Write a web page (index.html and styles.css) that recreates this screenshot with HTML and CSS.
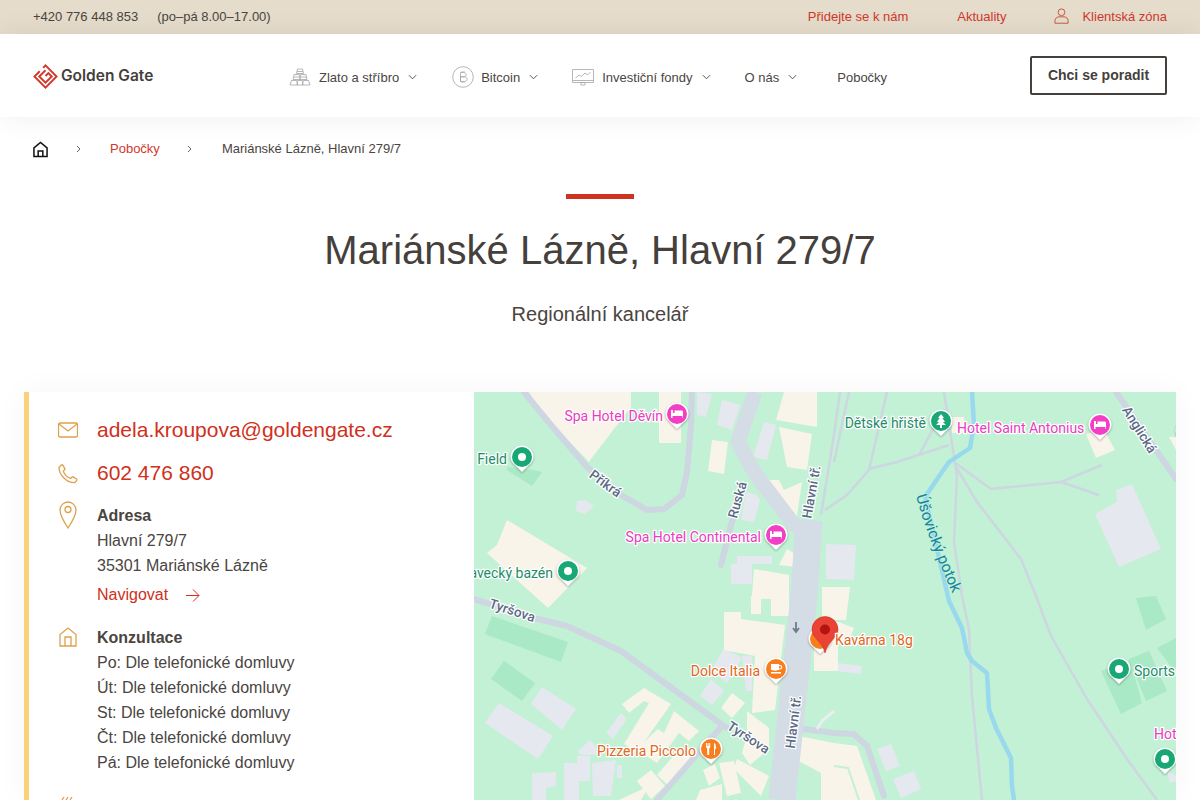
FILE: index.html
```html
<!DOCTYPE html>
<html lang="cs">
<head>
<meta charset="utf-8">
<title>Mariánské Lázně, Hlavní 279/7 | Golden Gate</title>
<link rel="stylesheet" href="styles.css">
</head>
<body>
<div class="topbar">
  <div class="topbar-left"><span>+420 776 448 853</span><span>(po–pá 8.00–17.00)</span></div>
  <div class="topbar-right">
    <a>Přidejte se k nám</a>
    <a>Aktuality</a>
    <a class="client"><svg class="user-icon" viewBox="0 0 16 17"><circle cx="8" cy="4.5" r="3.6"/><path d="M1 16.2v-2.6c0-2.4 1.9-4.2 4.2-4.2h5.600c2.300 0 4.200 1.800 4.200 4.200v2.600z"/></svg>Klientská zóna</a>
  </div>
</div>
<header class="header">
  <div class="logo">
    <svg class="logo-mark" viewBox="0 0 26 26"><path d="M10.500 4 13 1.500 24.500 13 13 24.500 1.500 13l5.500-5.500"/><path d="M13 6.500 6.500 13l6.500 6.500 6.500-6.500-3.500-3.500-3 3"/></svg>
    <span>Golden Gate</span>
  </div>
  <nav class="nav">
    <a class="nav-gold"><svg class="nav-icon bars" viewBox="0 0 22 18"><path d="M8.500 1h5l1 4.500h-7zM5 6.500h5.300l.7 5H4zM11.700 6.500H17l1 5h-7zM2.500 12.500h5.300l.7 4.500H1zM8.700 12.500h4.600l.7 4.500H8zM14.200 12.500h5.300l1.500 4.500h-7.500zM8 3.500h6M5 9h5.500M12 9h5.500"/></svg>Zlato a stříbro<svg class="chev" viewBox="0 0 10 6"><path d="m1 1 4 4 4-4"/></svg></a>
    <a class="nav-btc"><svg class="nav-icon btc" viewBox="0 0 22 22"><circle cx="11" cy="11" r="10.300"/><path d="M8.500 6.500h3.300c3.200 0 3.200 4.300 0 4.300H8.500m0 0h4c3.500 0 3.500 4.700 0 4.700h-4zM8.500 6.500v9M10 5v1.500M12 5v1.500M10 15.500V17M12 15.500V17"/></svg>Bitcoin<svg class="chev" viewBox="0 0 10 6"><path d="m1 1 4 4 4-4"/></svg></a>
    <a class="nav-fund"><svg class="nav-icon chart" viewBox="0 0 22 17"><path d="M.5.500h21v13H.5zM.5 11.500h21M9 13.500h4v2.500H9zM3.500 9l3.500-3 2.500 1.500L13 4l2.500 2 3-3"/></svg>Investiční fondy<svg class="chev" viewBox="0 0 10 6"><path d="m1 1 4 4 4-4"/></svg></a>
    <a class="nav-about">O nás<svg class="chev" viewBox="0 0 10 6"><path d="m1 1 4 4 4-4"/></svg></a>
    <a class="nav-branch">Pobočky</a>
  </nav>
  <a class="cta">Chci se poradit</a>
</header>
<div class="crumbs">
  <svg class="home" viewBox="0 0 16 17"><path d="M1 16V6.800L8 1l7 5.800V16zM5.500 16v-6h5v6"/></svg>
  <svg class="crumb-sep" viewBox="0 0 5 8"><path d="m1 1 3 3-3 3"/></svg>
  <a>Pobočky</a>
  <svg class="crumb-sep" viewBox="0 0 5 8"><path d="m1 1 3 3-3 3"/></svg>
  <span>Mariánské Lázně, Hlavní 279/7</span>
</div>
<section class="hero">
  <div class="hero-bar"></div>
  <h1>Mariánské Lázně, Hlavní 279/7</h1>
  <p>Regionální kancelář</p>
</section>
<main class="card">
  <div class="info">
    <div class="row row-mail">
      <svg class="ico" viewBox="0 0 20 16"><rect x=".5" y="1" width="19" height="14" rx="1.500"/><path d="m1 2 9 7 9-7"/></svg>
      <a class="big">adela.kroupova@goldengate.cz</a>
    </div>
    <div class="row row-phone">
      <svg class="ico" viewBox="0 0 20 20"><path d="M1 3.500 3.500 1c.5-.4 1-.4 1.300.1l2 3.500c.2.400.2.800-.1 1.100L5.300 7.100c1 3.200 3.800 6 7.300 7.400l1.400-1.500c.3-.3.700-.3 1.100-.1l3.500 2.100c.4.300.5.800.1 1.300L16.800 18.700C9 19 1 11 1 3.500z"/></svg>
      <a class="big">602 476 860</a>
    </div>
    <div class="row row-addr">
      <svg class="ico" viewBox="0 0 18 28"><path d="M9 27C5 21 1 15 1 9a8 8 0 0 1 16 0c0 6-4 12-8 18z"/><circle cx="9" cy="8.500" r="3"/></svg>
      <div class="txt">
        <strong>Adresa</strong>
        <div>Hlavní 279/7</div>
        <div>35301 Mariánské Lázně</div>
        <a class="navigate">Navigovat<svg class="arrow" viewBox="0 0 14 13"><path d="M0 6.500h13M7 .5l6 6-6 6"/></svg></a>
      </div>
    </div>
    <div class="row row-hours">
      <svg class="ico" viewBox="0 0 18 20"><path d="M1 19V7.500L9 1l8 6.500V19zM6 19v-9h6v9"/></svg>
      <div class="txt">
        <strong>Konzultace</strong>
        <div>Po: Dle telefonické domluvy</div>
        <div>Út: Dle telefonické domluvy</div>
        <div>St: Dle telefonické domluvy</div>
        <div>Čt: Dle telefonické domluvy</div>
        <div>Pá: Dle telefonické domluvy</div>
      </div>
    </div>
    <div class="row row-next">
      <svg class="ico ico-next" viewBox="0 0 20 20"><path d="M4 4 6 1M8 4l2-3M12 4l2-3"/></svg>
    </div>
  </div>
  <div class="map">
    <svg class="map-svg" viewBox="474 392 702 408">
      <defs>
        <path id="pinshape" d="M-11.500 0a11.500 11.500 0 1 1 23 0c0 3.800-2 6.300-5 8.500L0 15l-6.500-6.500c-3-2.200-5-4.700-5-8.500z"/>
        <path id="potok" d="M916 496 Q928 540 958 606"/>
      </defs>
      <g class="m-field">
        <path d="M507 467l26 3 9 2-10 14-25-16z"/>
        <path d="M492 616l76 26-7 20-76-28z"/>
        <path d="M504 661l31 22-13 18-31-22z"/>
        <path d="M1136 598l20-2 10 23-20 11z"/>
        <path d="M1157 648l19-10v35z"/>
        <path d="M1101 671l29-11 12 43-21 11z"/>
        <path d="M1129 659l20-8 18 40-21 10z"/>
      </g>
      <g class="m-gray">
        <path d="M697 392l15 2-6 23-9-2z"/>
        <path d="M722 400l18 5-8 25-15-5z"/>
        <path d="M764 422l12 3-9 35-14-3z"/>
        <path d="M746 492l11 3 3 5-6 22-13-2z"/>
        <path d="M577 501l8-1 9 6-9 8-9-3z"/>
        <path d="M737 556h35v8h-35zM731 564h21v20h-21z"/>
        <path d="M826 544l30 1-2 35-28-1z"/>
        <path d="M542 687l34 22-14 21-31-26z"/>
        <path d="M499 703l54 33-15 23-53-36z"/>
        <path d="M621 713l6 6-14 20-7-6z"/>
        <path d="M577 756h13v25h-13z"/>
        <path d="M564 763h15v37h-15z"/>
        <path d="M592 763l24-3-5 36h-18z"/>
        <path d="M617 765h5v13h-5z"/>
        <path d="M532 773l24-1v14l-10 2v12h-14z"/>
        <path d="M577 752l13-12 7 8v7h-15z"/>
        <path d="M724 648l18 10-15 25-16-12z"/>
        <path d="M711 679l13 12-12 14-12-9z"/>
        <path d="M742 656h10v35h-6z"/>
        <path d="M838 663l24 3-1 8-24-3z"/>
        <path d="M877 749l14-5 9 22-14 5z"/>
        <path d="M893 779l21-8 7 18-20 9z"/>
        <path d="M1116 490l16-6 29 65-42 18-24-53 22-12z"/>
        <path d="M1167 771l9 5v5l-6 2z"/>
      </g>
      <g class="m-built">
        <path d="M529 392h102v15l-37 48-5 7-45-47-3-1z"/>
        <path d="M659 392h22v51h-22z"/>
        <path d="M712 440l16 2-4 32-16-3z"/>
        <path d="M784 392h33v35l-41-7z"/>
        <path d="M779 427l33 7-5 36-20-3z"/>
        <path d="M767 480h12l5 10 18-8-6 40-29-33z"/>
        <path d="M787 549l10 6-1 12-17-2z"/>
        <path d="M754 569l35 6v21h-37z"/>
        <path d="M507 520l80 48-39 40-61-55 10-8z"/>
        <path d="M751 596h38v20h-18v-17h-10v15h-10z"/>
        <path d="M822 587h28l-4 33h-24z"/>
        <path d="M724 612h17v7l44 6-10 85-23 3 3-57-31-6z"/>
        <path d="M814 625l25-3 15 6-5 12-11 1v30h-24z"/>
        <path d="M622 704l22-16 27 16-34 48-13-8 25-41-5-2-15 12z"/>
        <path d="M674 711l25 20-10 10-10-8-22 30-21-14 22-20 6 4z"/>
        <path d="M681 747l14 14-24 27-14-13z"/>
        <path d="M637 781l14-11 14 16-14 13z"/>
        <path d="M732 693l13 10-13 15-11-10z"/>
        <path d="M747 711l22 17v21l-19 16-8-12 5-18z"/>
        <path d="M737 759l32 17-8 20-27-27z"/>
        <path d="M719 763l15-2 7 32-14 3z"/>
        <path d="M703 770l12-6 5 14-11 8z"/>
        <path d="M700 790l22-6v16h-26z"/>
        <path d="M799 736l35 7 23 3 19 54h-42l-13 0v-27l-26-14z"/>
        <path d="M952 417h12v16h-12z"/>
        <path d="M1086 434l18-4 11 20-19 8z"/>
        <path d="M1169 437h7v13z"/>
        <path d="M649 786l-8 14h-22z"/>
      </g>
      <path class="m-inner" d="M834 766l14 2 11 32"/>
      <g class="m-road">
        <path d="M524 392l27 33 36 42 34 28 26 15 17-1 18-14 5-23 4-47 1-33"/>
        <path d="M474 599l60 19 33 8 54 25 100 73 6 4"/>
        <path d="M722 726l-65 74"/>
        <path d="M744 489l-13 36-10 40"/>
        <path d="M804 729l30 4 20 1 13 12 17 50"/>
        <path d="M1116 392l60 87"/>
      </g>
      <g class="m-road-thin">
        <path d="M821 515l13-80 6-43"/>
        <path d="M834 462l15-70"/>
        <path d="M887 392l-18 78-22 25-22 15"/>
        <path d="M869 469l28-7 52-17"/>
        <path d="M919 455l25-46"/>
        <path d="M944 392l5 33 8 50-3 67 8 54 7 33 3 67 10 104"/>
        <path d="M954 462l37 27 70-7 41-17"/>
        <path d="M1061 482l38 13"/>
        <path d="M956 467l21 35 44 57 15 37 15 40 36 63 40 60 30 41"/>
      </g>
      <path class="m-road-white" d="M834 711l-12 10-5 8"/>
      <path class="m-main" d="M755 392l-17 50 16 30 40 53 13 7"/>
      <path class="m-main2" d="M809 520l-5 76-22 204"/>
      <path class="m-stream" d="M972 392l2 33-4 23-21 14-7 10-17 25M925 497l24 104 13 27 5 25 5 8 15 12 2 36 7 19 15 30 1 28 2 14"/>
      <path class="m-arrow" d="M796 622v9M793 628l3 4 3-4"/>

      <g class="m-pin pink"><g transform="translate(677 414)"><use href="#pinshape" class="pin-bg"/><circle class="pin-c" r="10"/><path class="pin-ic" d="M-6-4h2v3h1.500v-2.500h7c1 0 1.500.5 1.500 1.500v6H5.500V2h-10v2H-6z"/></g></g>
      <g class="m-pin green"><g transform="translate(522 457)"><use href="#pinshape" class="pin-bg"/><circle class="pin-c" r="10"/><circle class="pin-ic" r="4"/></g></g>
      <g class="m-pin green"><g transform="translate(568 571)"><use href="#pinshape" class="pin-bg"/><circle class="pin-c" r="10"/><circle class="pin-ic" r="4"/></g></g>
      <g class="m-pin pink"><g transform="translate(776 535)"><use href="#pinshape" class="pin-bg"/><circle class="pin-c" r="10"/><path class="pin-ic" d="M-6-4h2v3h1.500v-2.500h7c1 0 1.500.5 1.500 1.500v6H5.500V2h-10v2H-6z"/></g></g>
      <g class="m-pin green"><g transform="translate(941 421)"><use href="#pinshape" class="pin-bg"/><circle class="pin-c" r="10"/><path class="pin-ic" d="M0-7l3 4H1.500L4 1H2l3 3H1v3h-2V4h-4l3-3h-2l2.500-4H-3z"/></g></g>
      <g class="m-pin pink"><g transform="translate(1100 425)"><use href="#pinshape" class="pin-bg"/><circle class="pin-c" r="10"/><path class="pin-ic" d="M-6-4h2v3h1.500v-2.500h7c1 0 1.500.5 1.500 1.500v6H5.500V2h-10v2H-6z"/></g></g>
      <g class="m-pin orange"><g transform="translate(776 669)"><use href="#pinshape" class="pin-bg"/><circle class="pin-c" r="10"/><path class="pin-ic" d="M-5-5h8v1h1c3 0 3 4.500 0 4.500H3C2.500 2-4 2-5 .5zM3-3v2.500h1c1.500 0 1.500-2.500 0-2.500zM-5 3H5v1.500H-5z"/></g></g>
      <g class="m-pin orange"><g transform="translate(711 749)"><use href="#pinshape" class="pin-bg"/><circle class="pin-c" r="10"/><path class="pin-ic" d="M-5-6h1v3h.6v-3h1v3h.6v-3h1v4.500l-1 1V6h-2V-.5l-1-1zM3-6c1.500 0 2 2.500 2 5v1H4v6H3z"/></g></g>
      <g class="m-pin orange"><g transform="translate(820 639)"><use href="#pinshape" class="pin-bg"/><circle class="pin-c" r="10"/></g></g>
      <g class="m-pin green"><g transform="translate(1119 669)"><use href="#pinshape" class="pin-bg"/><circle class="pin-c" r="10"/><circle class="pin-ic" r="4"/></g></g>
      <g class="m-pin green"><g transform="translate(1165 759)"><use href="#pinshape" class="pin-bg"/><circle class="pin-c" r="10"/><circle class="pin-ic" r="4"/></g></g>
      <g class="m-pin green"><g transform="translate(736 811)"><use href="#pinshape" class="pin-bg"/></g></g>
      <g class="m-pin pink"><g transform="translate(1187 431)"><use href="#pinshape" class="pin-bg"/><circle class="pin-c" r="10"/></g></g>

      <path class="marker" d="M825 653c-1.500-6-4-9-7.500-13-3-3.500-5.500-6-5.500-10.500a13 13 0 0 1 26 0c0 4.500-2.500 7-5.500 10.500-3.500 4-6 7-7.500 13z"/>
      <circle class="marker-dot" cx="825" cy="629.500" r="5"/>

      <text class="t t-pink" x="663" y="421" text-anchor="end">Spa Hotel Děvín</text>
      <text class="t t-green" x="507" y="464" text-anchor="end">Field</text>
      <text class="t t-green" x="553" y="578" text-anchor="end">Plavecký bazén</text>
      <text class="t t-pink" x="761" y="542" text-anchor="end">Spa Hotel Continental</text>
      <text class="t t-green" x="926" y="428" text-anchor="end">Dětské hřiště</text>
      <text class="t t-pink" x="957" y="433">Hotel Saint Antonius</text>
      <text class="t t-orange" x="835" y="645">Kavárna 18g</text>
      <text class="t t-orange" x="760" y="676" text-anchor="end">Dolce Italia</text>
      <text class="t t-orange" x="696" y="756" text-anchor="end">Pizzeria Piccolo</text>
      <text class="t t-green" x="1134" y="676">Sports</text>
      <text class="t t-pink" x="1154" y="739">Hot</text>

      <text class="t t-road" transform="translate(605 484) rotate(36)" text-anchor="middle" dy="4">Příkrá</text>
      <text class="t t-road" transform="translate(738 500) rotate(-74)" text-anchor="middle" dy="4">Ruská</text>
      <text class="t t-road" transform="translate(812 492) rotate(-80)" text-anchor="middle" dy="4">Hlavní tř.</text>
      <text class="t t-road" transform="translate(794 722) rotate(-83)" text-anchor="middle" dy="4">Hlavní tř.</text>
      <text class="t t-road" transform="translate(512 611) rotate(18)" text-anchor="middle" dy="4">Tyršova</text>
      <text class="t t-road" transform="translate(748 738) rotate(33)" text-anchor="middle" dy="4">Tyršova</text>
      <text class="t t-road" transform="translate(1139 430) rotate(58)" text-anchor="middle" dy="4">Anglická</text>
      <text class="t t-water"><textPath href="#potok">Úšovický potok</textPath></text>
    </svg>
  </div>
</main>
</body>
</html>
```
FILE: styles.css
```css
* { box-sizing: border-box; }
html, body { margin: 0; padding: 0; height: 800px; overflow: hidden; background: #fff; }
body { font-family: "Liberation Sans", Arial, sans-serif; font-size: 16px; color: #4a453f; }
svg { display: block; fill: none; }

.topbar { height: 34px; background: #e5dccb; display: flex; align-items: center; justify-content: space-between; padding: 0 33px 1px; font-size: 13px; }
.topbar-left { display: flex; gap: 19px; }
.topbar-right { display: flex; align-items: center; gap: 49px; color: #d0392a; }
.client { display: flex; align-items: center; gap: 13px; margin-left: -1px; }
.user-icon { width: 15px; height: 16px; stroke: #c9503f; stroke-width: 1; margin-top: -1px; }

.header { height: 83px; display: flex; align-items: flex-start; padding: 0 33px; background: #fff; position: relative; box-shadow: 0 0 28px rgba(0, 0, 0, .07); }
.logo { display: flex; align-items: center; gap: 3px; width: 256px; height: 83px; font-family: Inter, "Liberation Sans", sans-serif; font-weight: 600; font-size: 15.500px; color: #45403b; }
.logo-mark { width: 25px; height: 25px; stroke: #d2392a; stroke-width: 2; margin-top: 1px; }
.nav { display: flex; align-items: center; height: 86px; font-size: 13px; width: 741px; }
.nav a { display: flex; align-items: center; }
.nav-icon { stroke: #a5a5a5; stroke-width: .8; margin-right: 8px; }
.bars { width: 22px; height: 18px; }
.btc { width: 22px; height: 22px; margin-right: 7px; }
.chart { width: 22px; height: 17px; margin-right: 8px; }
.chev { width: 9px; height: 6px; margin-left: 9px; stroke: #45403b; stroke-width: 1; }
.nav-btc { margin-left: 35px; }
.nav-fund { margin-left: 34px; }
.nav-about { margin-left: 34px; }
.nav-branch { margin-left: 40px; }
.cta { margin-top: 22px; margin-left: auto; flex: none; width: 137px; height: 39px; border: 2px solid #45403b; border-radius: 2px; font-size: 14px; font-weight: 700; display: flex; align-items: center; justify-content: center; color: #45403b; padding-bottom: 2px; }

.crumbs { height: 62px; display: flex; align-items: center; padding-left: 33px; font-size: 13px; }
.crumbs a { color: #d0392a; }
.home { width: 15px; height: 17px; stroke: #111; stroke-width: 1.600; margin-top: 2px; }
.crumb-sep { width: 5px; height: 8px; stroke: #666; stroke-width: 1; margin: 1px 30px 0 28px; }
.crumb-sep:nth-of-type(2) { margin-right: 29px; }
.crumb-sep:nth-of-type(3) { margin-left: 27px; }

.hero { display: flex; flex-direction: column; align-items: center; padding-top: 15px; }
.hero-bar { width: 68px; height: 5px; background: #cf3320; }
.hero h1 { margin: 26px 0 0; font-size: 40px; line-height: 50px; font-weight: 400; color: #45403b; }
.hero p { margin: 24px 0 0; font-size: 20px; line-height: 30px; }

.card { margin: 63px 24px 0; height: 408px; display: flex; background: #fff; border-left: 5px solid #f9d27a; box-shadow: 0 0 30px rgba(0, 0, 0, .04); }
.info { width: 445px; flex: none; padding: 21px 0 0 29px; overflow: hidden; }
.row { display: flex; gap: 19px; }
.ico { width: 20px; flex: none; stroke: #dfa04e; stroke-width: 1.300; }
.big { font-size: 21px; line-height: 34px; color: #cf3020; }
.row-mail .ico { height: 16px; margin-top: 9px; }
.row-phone { margin-top: 9px; }
.row-phone .ico { height: 20px; margin-top: 8px; }
.row-addr { margin-top: 13px; }
.row-addr .ico { height: 28px; margin-top: -2px; }
.txt { line-height: 25px; }
.txt strong { display: block; font-weight: 700; }
.navigate { display: flex; align-items: center; gap: 18px; margin-top: 4px; color: #cf3020; }
.arrow { width: 14px; height: 13px; stroke: #cf3020; stroke-width: 1; margin-top: 2px; }
.row-hours { margin-top: 18px; }
.row-hours .ico { height: 20px; margin-top: 2px; }
.row-next { margin-top: 21px; }
.ico-next { height: 20px; }

.map { flex: 1; height: 408px; overflow: hidden; background: #c2f1d5; }
.map-svg { width: 702px; height: 408px; }
.m-field { fill: #a9e9c5; }
.m-gray { fill: #e6e8ef; }
.m-built { fill: #f9f4e9; }
.m-inner { stroke: #c2f1d5; stroke-width: 2; }
.m-road { stroke: #cdd6e1; stroke-width: 6; stroke-linejoin: round; stroke-linecap: round; }
.m-road-thin { stroke: #cdd6e1; stroke-width: 2.500; stroke-linejoin: round; }
.m-road-white { stroke: #e9eef1; stroke-width: 3; }
.m-main { stroke: #d4dce5; stroke-width: 15; stroke-linejoin: round; }
.m-main2 { stroke: #d4dce5; stroke-width: 27; }
.m-stream { stroke: #98d9ee; stroke-width: 4.500; stroke-linejoin: round; }
.m-arrow { stroke: #6d7a8b; stroke-width: 1.800; }
.pin-bg { fill: #fff; filter: drop-shadow(0 1px 1px rgba(0, 0, 0, .3)); }
.pink .pin-c { fill: #f33ec6; }
.green .pin-c { fill: #18a875; }
.orange .pin-c { fill: #f77f20; }
.pin-ic { fill: #fff; }
.marker { fill: #ea4335; stroke: #c5221f; stroke-width: .5; }
.marker-dot { fill: #b31412; }

.t { font-family: Roboto, "Liberation Sans", sans-serif; font-size: 14px; paint-order: stroke; stroke: #fff; stroke-width: 2.500; stroke-linejoin: round; }
.t-pink { fill: #e93cc0; }
.t-green { fill: #1c8d68; }
.t-orange { fill: #e2661b; }
.t-road { fill: #5b6a85; font-size: 13.500px; font-weight: 500; }
.t-water { fill: #11839f; font-size: 15.500px; stroke: #c2f1d5; stroke-width: 1.500; }
```
